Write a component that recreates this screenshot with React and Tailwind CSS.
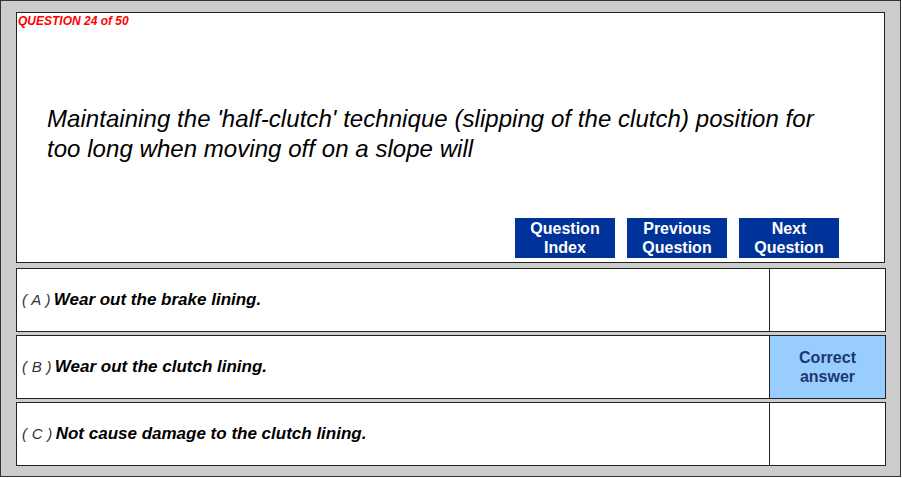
import React from 'react';

const answers = [
    { letter: "A", text: "Wear out the brake lining.", correct: false },
    { letter: "B", text: "Wear out the clutch lining.", correct: true },
    { letter: "C", text: "Not cause damage to the clutch lining.", correct: false },
];

export default function App() {
    return (
        <div className="w-[901px] h-[477px] border border-[#333] bg-[#cccccc] pl-[15px] pt-[11px] font-['Liberation_Sans',Arial,sans-serif]">
            {/* question panel */}
            <div className="w-[869px] h-[251px] border border-[#222] bg-white flex flex-col">
                <div className="pl-[1px] pt-[1px] text-[12px] leading-[14px] font-bold italic text-[#ff0000]">
                    QUESTION 24 of 50
                </div>
                <div className="pl-[30px] pt-[76px] pr-[40px] text-[24px] leading-[30px] italic text-black tracking-[0.05px]">
                    Maintaining the 'half-clutch' technique (slipping of the clutch) position for too long when moving off on a slope will
                </div>
                <div className="flex gap-[12px] pl-[498px] mt-auto mb-[4px]">
                    <button className="w-[100px] h-[40px] bg-[#003399] text-white font-bold text-[16px] leading-[19px]">Question<br />Index</button>
                    <button className="w-[100px] h-[40px] bg-[#003399] text-white font-bold text-[16px] leading-[19px]">Previous<br />Question</button>
                    <button className="w-[100px] h-[40px] bg-[#003399] text-white font-bold text-[16px] leading-[19px]">Next<br />Question</button>
                </div>
            </div>

            {/* answers */}
            <div className="mt-[5px] flex flex-col gap-[3px]">
                {answers.map((a) => (
                    <div key={a.letter} className="w-[870px] h-[64px] border border-[#222] bg-white flex">
                        <div className="flex-1 flex items-center pl-[5px] text-black">
                            <span className="italic text-[15px] text-[#333] mr-[3px] tracking-[0.3px]">( {a.letter} )</span>
                            <span className="italic font-bold text-[17px]">{a.text}</span>
                        </div>
                        <div className={`w-[116px] border-l border-[#222] flex items-center justify-center text-center font-bold text-[16px] leading-[19px] text-[#1a3a6e] ${a.correct ? "bg-[#99ccff]" : "bg-white"}`}>
                            {a.correct && <span>Correct<br />answer</span>}
                        </div>
                    </div>
                ))}
            </div>
        </div>
    );
}
